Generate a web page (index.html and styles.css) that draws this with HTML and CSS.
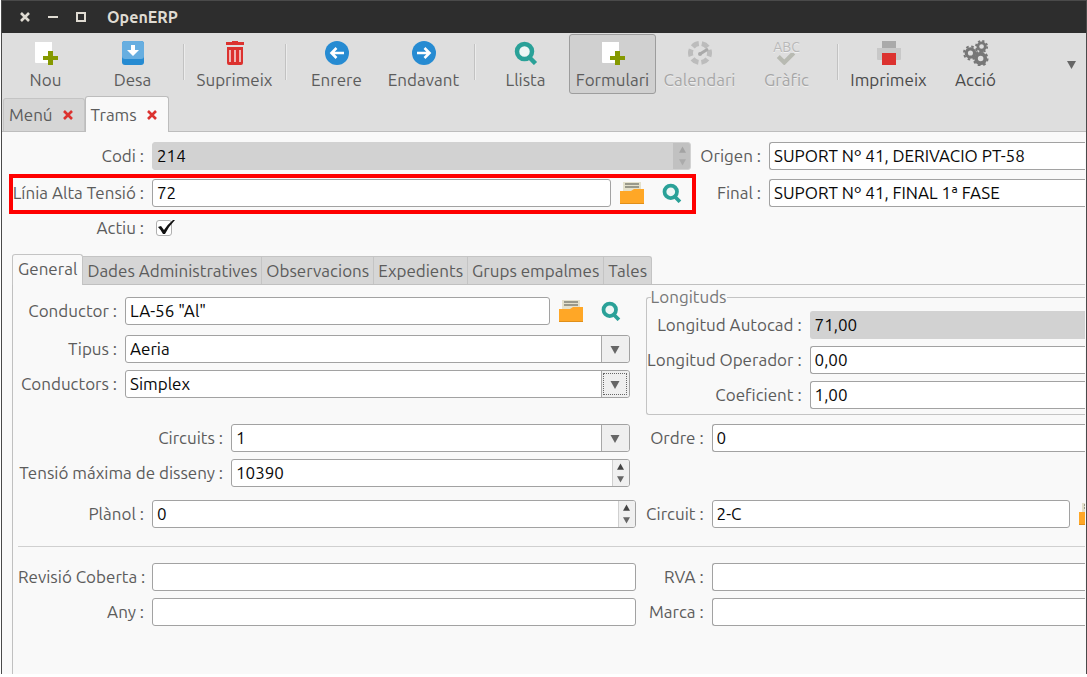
FILE: index.html
```html
<!DOCTYPE html>
<html lang="ca">
<head>
<meta charset="utf-8">
<title>OpenERP</title>
<link rel="stylesheet" href="styles.css">
</head>
<body>
<svg class="sprite" aria-hidden="true">
  <symbol id="i-new" viewBox="0 0 24 24"><path d="M1 1h17v13h-4v4h3v4H2a1 1 0 0 1-1-1z" fill="#fff"/><path d="M14 10h5v5h5v4h-5v5h-5v-5H9v-4h5z" fill="#859900"/></symbol>
  <symbol id="i-save" viewBox="0 0 24 24"><rect x="1" y="0" width="22" height="24" rx="3" fill="#268bd2"/><path d="M4 0h16a3 3 0 0 1 3 3v12a3 3 0 0 1-3 3H4a3 3 0 0 1-3-3V3a3 3 0 0 1 3-3z" fill="#67aee0"/><path d="M10 4h4v5h4l-6 6-6-6h4z" fill="#fff"/></symbol>
  <symbol id="i-trash" viewBox="0 0 24 24"><path d="M9 0h6v1h6v3H3V1h6zM4 6h16v16a2 2 0 0 1-2 2H6a2 2 0 0 1-2-2z" fill="#dc322f"/><path d="M7 9v12M12 9v12M17 9v12" stroke="#f0b5b4" stroke-width="2"/></symbol>
  <symbol id="i-back" viewBox="0 0 24 24"><circle cx="12" cy="12" r="12" fill="#268bd2"/><path d="M19 12H7M11.500 7l-5 5 5 5" fill="none" stroke="#fff" stroke-width="2.600"/></symbol>
  <symbol id="i-next" viewBox="0 0 24 24"><circle cx="12" cy="12" r="12" fill="#268bd2"/><path d="M5 12h12M12.500 7l5 5-5 5" fill="none" stroke="#fff" stroke-width="2.600"/></symbol>
  <symbol id="i-search" viewBox="0 0 24 24"><circle cx="10.500" cy="10.500" r="7.500" fill="#eef6f5" stroke="#2aa198" stroke-width="4.500"/><path d="M15.500 16.500l6 6" stroke="#2aa198" stroke-width="4.500"/></symbol>
  <symbol id="i-gauge" viewBox="0 0 24 24"><circle cx="12" cy="12" r="9.500" fill="none" stroke="#bcbcbc" stroke-width="5" stroke-dasharray="6.900 3.050" stroke-dashoffset="3.450"/><path d="M12 13l8-5" stroke="#aaa" stroke-width="3"/><circle cx="12" cy="13" r="2" fill="#aaa"/></symbol>
  <symbol id="i-gears" viewBox="0 0 28 28"><g fill="none" stroke="#777"><circle cx="8" cy="14" r="4.500" stroke-width="3.500"/><circle cx="8" cy="14" r="7" stroke-width="2" stroke-dasharray="2.750 2.750"/><circle cx="20" cy="7" r="4" stroke-width="3"/><circle cx="20" cy="7" r="6" stroke-width="2" stroke-dasharray="2.360 2.360"/><circle cx="19" cy="20" r="5" stroke-width="4"/><circle cx="19" cy="20" r="7.500" stroke-width="2" stroke-dasharray="2.950 2.950"/></g></symbol>
  <symbol id="i-print" viewBox="0 0 24 24"><path d="M5 0h14v7H5z" fill="#aaa"/><path d="M0 7h24v11a1 1 0 0 1-1 1H1a1 1 0 0 1-1-1z" fill="#c8c8c8"/><path d="M5 12h14v12H5z" fill="#dc322f"/></symbol>
  <symbol id="i-check" viewBox="0 0 24 14"><path d="M3 4l7 7L21 0" fill="none" stroke="#b8bab2" stroke-width="5"/></symbol>
  <symbol id="i-folder" viewBox="0 0 24 24"><path d="M3 1h18v16H3z" fill="#e4e1cc"/><path d="M5 3h14M5 6h14" stroke="#99998a" stroke-width="2"/><path d="M0 10h11l3-2h10v15H0z" fill="#ffa726"/><path d="M0 22h24v1H0z" fill="#e08f1a"/></symbol>
  <symbol id="i-down" viewBox="0 0 10 10"><path d="M0 1h10L5 10z" fill="#666"/></symbol>
  <symbol id="i-up" viewBox="0 0 10 10"><path d="M0 9h10L5 0z" fill="#444"/></symbol>
  <symbol id="i-x" viewBox="0 0 10 10"><path d="M1 1l8 8M9 1L1 9" stroke="currentColor" stroke-width="2.600"/></symbol>
</svg>

<div class="window">
  <header class="titlebar">
    <button class="winbtn" aria-label="Tanca"><svg><use href="#i-x"/></svg></button>
    <button class="winbtn" aria-label="Minimitza"><svg viewBox="0 0 10 10"><path d="M0 5h10" stroke="currentColor" stroke-width="2"/></svg></button>
    <button class="winbtn" aria-label="Maximitza"><svg viewBox="0 0 10 10"><path d="M1 1h8v8H1z" fill="none" stroke="currentColor" stroke-width="2"/></svg></button>
    <h1 class="title">OpenERP</h1>
  </header>

  <nav class="toolbar">
    <button class="tool"><svg><use href="#i-new"/></svg>Nou</button>
    <button class="tool"><svg><use href="#i-save"/></svg>Desa</button>
    <span class="sep"></span>
    <button class="tool"><svg><use href="#i-trash"/></svg>Suprimeix</button>
    <span class="sep"></span>
    <button class="tool"><svg><use href="#i-back"/></svg>Enrere</button>
    <button class="tool"><svg><use href="#i-next"/></svg>Endavant</button>
    <span class="sep"></span>
    <button class="tool"><svg><use href="#i-search"/></svg>Llista</button>
    <button class="tool tool--active"><svg><use href="#i-new"/></svg>Formulari</button>
    <button class="tool" disabled><svg><use href="#i-gauge"/></svg>Calendari</button>
    <button class="tool" disabled><span class="abc"><span>ABC</span><svg><use href="#i-check"/></svg></span>Gràfic</button>
    <span class="sep"></span>
    <button class="tool tool--dark"><svg><use href="#i-print"/></svg>Imprimeix</button>
    <button class="tool tool--dark"><svg class="gears"><use href="#i-gears"/></svg>Acció</button>
    <button class="more" aria-label="Més"><svg><use href="#i-down"/></svg></button>
  </nav>

  <div class="doctabs">
    <div class="doctab"><span>Menú</span><button class="close" aria-label="Tanca Menú"><svg><use href="#i-x"/></svg></button></div>
    <div class="doctab doctab--active"><span>Trams</span><button class="close" aria-label="Tanca Trams"><svg><use href="#i-x"/></svg></button></div>
  </div>

  <main class="page">
    <section class="head">
      <div class="rows rows--head">
        <div class="row"><label for="codi">Codi :</label><div class="spin spin--off"><input id="codi" value="214" readonly><span class="steps"><button aria-label="Més" disabled><svg><use href="#i-up"/></svg></button><button aria-label="Menys" disabled><svg><use href="#i-down"/></svg></button></span></div></div>
        <div class="row row--marked"><label for="linia">Línia Alta Tensió :</label><div class="lookup"><input class="field" id="linia" value="72"><button class="icon" aria-label="Obre"><svg><use href="#i-folder"/></svg></button><button class="icon" aria-label="Cerca"><svg><use href="#i-search"/></svg></button></div></div>
        <div class="row row--check"><label for="actiu">Actiu :</label><span class="check"><input type="checkbox" id="actiu" checked><svg viewBox="0 0 20 18"><path d="M2 8l3-1 3 4q4-6 9-10l2 0q-6 6-10 14H7q-2-4-5-7z"/></svg></span></div>
      </div>
      <div class="rows rows--origin">
        <div class="row"><label for="origen">Origen :</label><input class="field field--cut" id="origen" value="SUPORT Nº 41, DERIVACIO PT-58"></div>
        <div class="row"><label for="final">Final :</label><input class="field field--cut" id="final" value="SUPORT Nº 41, FINAL 1ª FASE"></div>
      </div>
    </section>

    <div class="tabs" role="tablist">
      <button class="tab tab--active" role="tab" aria-selected="true">General</button>
      <button class="tab" role="tab">Dades Administratives</button>
      <button class="tab" role="tab">Observacions</button>
      <button class="tab" role="tab">Expedients</button>
      <button class="tab" role="tab">Grups empalmes</button>
      <button class="tab" role="tab">Tales</button>
    </div>

    <section class="pane" role="tabpanel">
      <div class="split">
        <div class="rows rows--conductor">
          <div class="row row--loose"><label for="conductor">Conductor :</label><div class="lookup"><input class="field" id="conductor" value="LA-56 &quot;Al&quot;"><button class="icon" aria-label="Obre"><svg><use href="#i-folder"/></svg></button><button class="icon" aria-label="Cerca"><svg><use href="#i-search"/></svg></button></div></div>
          <div class="row"><label for="tipus">Tipus :</label><div class="combo"><select id="tipus"><option>Aeria</option></select><span class="arrow"><svg><use href="#i-down"/></svg></span></div></div>
          <div class="row"><label for="conductors">Conductors :</label><div class="combo combo--focus"><select id="conductors"><option>Simplex</option></select><span class="arrow"><svg><use href="#i-down"/></svg></span></div></div>
        </div>
        <fieldset class="group">
          <legend>Longituds</legend>
          <div class="rows rows--length">
            <div class="row"><label for="autocad">Longitud Autocad :</label><input class="field field--cut field--off" id="autocad" value="71,00" readonly></div>
            <div class="row"><label for="operador">Longitud Operador :</label><input class="field field--cut" id="operador" value="0,00"></div>
            <div class="row"><label for="coef">Coeficient :</label><input class="field field--cut" id="coef" value="1,00"></div>
          </div>
        </fieldset>
      </div>

      <div class="split">
        <div class="rows rows--circuits">
          <div class="row"><label for="circuits">Circuits :</label><div class="combo"><select id="circuits"><option>1</option></select><span class="arrow"><svg><use href="#i-down"/></svg></span></div></div>
          <div class="row"><label for="tensio">Tensió máxima de disseny :</label><div class="spin"><input id="tensio" value="10390"><span class="steps"><button aria-label="Més"><svg><use href="#i-up"/></svg></button><button aria-label="Menys"><svg><use href="#i-down"/></svg></button></span></div></div>
        </div>
        <div class="rows rows--right">
          <div class="row"><label for="ordre">Ordre :</label><input class="field field--cut" id="ordre" value="0"></div>
        </div>
      </div>

      <div class="split">
        <div class="rows rows--left">
          <div class="row"><label for="planol">Plànol :</label><div class="spin"><input id="planol" value="0"><span class="steps"><button aria-label="Més"><svg><use href="#i-up"/></svg></button><button aria-label="Menys"><svg><use href="#i-down"/></svg></button></span></div></div>
        </div>
        <div class="rows rows--right">
          <div class="row"><label for="circuit">Circuit :</label><div class="lookup lookup--cut"><input class="field" id="circuit" value="2-C"><button class="icon" aria-label="Obre"><svg><use href="#i-folder"/></svg></button></div></div>
        </div>
      </div>

      <hr class="rule">

      <div class="split">
        <div class="rows rows--left">
          <div class="row"><label for="revisio">Revisió Coberta :</label><input class="field" id="revisio"></div>
          <div class="row"><label for="any">Any :</label><input class="field" id="any"></div>
        </div>
        <div class="rows rows--right">
          <div class="row"><label for="rva">RVA :</label><input class="field field--cut" id="rva"></div>
          <div class="row"><label for="marca">Marca :</label><input class="field field--cut" id="marca"></div>
        </div>
      </div>
    </section>
  </main>
</div>
</body>
</html>
```

FILE: styles.css
```css
* { box-sizing: border-box; }

body {
  margin: 0;
  padding: 0 0 3px 1px;
  background: #fff;
  color: #5c5c5c;
  font: 17px/20px Ubuntu, "Noto Sans", sans-serif;
}

button, input, select { font: inherit; color: inherit; margin: 0; }
button { background: none; border: 0; padding: 0; }
svg { display: block; overflow: visible; }
.sprite { position: absolute; width: 0; height: 0; }

.window {
  display: flex;
  flex-direction: column;
  min-height: calc(100vh - 3px);
  border: solid #4a4a4a;
  border-width: 1px 1px 0;
  background: #dedede;
  overflow: hidden;
}

/* Title bar */
.titlebar {
  display: flex;
  align-items: center;
  gap: 18px;
  height: 32px;
  padding-left: 18px;
  background: #2d2d2d;
  color: #dfdbd2;
}
.winbtn svg { width: 10px; height: 10px; }
.title { margin: 0 0 0 3px; font-size: 16px; font-weight: 600; }

/* Toolbar */
.toolbar { display: flex; height: 62px; }
.tool {
  display: flex;
  flex: none;
  flex-direction: column;
  align-items: center;
  gap: 5px;
  width: 87px;
  height: 60px;
  margin-top: 1px;
  padding-top: 6px;
  border: 1px solid transparent;
  border-radius: 3px;
}
.tool svg { width: 24px; height: 24px; }
.tool .gears { width: 28px; height: 26px; margin: -1px 0; }
.tool--active { background: #d0d0d0; border-color: #9d9d9d; }
.tool--dark { color: #4a4a4a; }
.tool:disabled { color: #a6a6a6; text-shadow: 0 1px #f0f0f0; }
.tool .abc { display: flex; flex-direction: column; align-items: center; height: 24px; font-size: 14px; line-height: 12px; color: #b8b8b8; }
.tool .abc svg { width: 24px; height: 12px; }
.sep { flex: none; width: 1px; height: 36px; margin: 11px 7px 0; background: #c2c2c2; box-shadow: 1px 0 #ececec; }
.more { margin: 0 10px 0 auto; }
.more svg { width: 9px; height: 9px; }

/* Document tabs */
.doctabs { display: flex; align-items: flex-end; height: 37px; padding-left: 1px; border-bottom: 1px solid #bdbdbd; }
.doctab {
  display: flex;
  align-items: center;
  gap: 10px;
  height: 33px;
  padding: 0 11px 0 5px;
  border: 1px solid #c4c4c4;
  border-bottom: 0;
  border-radius: 3px 3px 0 0;
  background: #d6d6d6;
}
.doctab--active { height: 36px; margin-bottom: -1px; background: #f9f9f9; border-color: #bdbdbd; }
.close { color: #dc322f; }
.close svg { width: 10px; height: 10px; }

/* Form layout */
.page { flex: 1; display: flex; flex-direction: column; padding: 10px 1px 0 10px; background: #f9f9f9; }
.head { display: grid; grid-template-columns: 679fr 394fr; }
.rows { display: flex; flex-direction: column; gap: 7px; min-width: 0; }
.row { display: grid; grid-template-columns: var(--label) 1fr; gap: 8px; align-items: center; }
.row label { text-align: right; white-space: nowrap; }
.rows--head, .rows--origin { gap: 9px; }
.rows--head { --label: 132px; }
.rows--origin { --label: 70px; }
.rows--conductor { --label: 99px; padding-right: 6px; }
.rows--circuits { --label: 205px; padding-right: 6px; }
.rows--left { --label: 126px; }
.rows--right { --label: 58px; }
.rows--length { --label: 155px; }
.row--loose { margin-bottom: 3px; }
.row--check { height: 24px; }

.row--marked { position: relative; }
.row--marked::after {
  content: "";
  position: absolute;
  inset: -5px -5px -7px -3px;
  border: 4px solid #f00;
  pointer-events: none;
}

/* Controls */
.field, .spin, .combo {
  width: 100%;
  min-width: 0;
  height: 28px;
  border: 1px solid #a2a2a2;
  border-radius: 3px;
  background: #fff;
  color: #080808;
}
.field { padding: 0 4px 2px; }
.field--cut { border-right: 0; border-radius: 3px 0 0 3px; }
.field--off { background: #d2d2d2; border-color: #d2d2d2; }

.lookup { display: flex; align-items: center; gap: 9px; }
.icon { flex: none; }
.icon svg { width: 24px; height: 24px; }
.icon + .icon { margin: 0 9px; }
.icon + .icon svg { width: 20px; height: 20px; }
.lookup--cut { overflow: hidden; }
.lookup--cut .icon { width: 6px; overflow: hidden; }

.spin { display: flex; overflow: hidden; }
.spin input { flex: 1; min-width: 0; padding: 0 4px 1px; border: 0; background: none; }
.steps { display: flex; flex-direction: column; justify-content: space-evenly; width: 17px; border-left: 1px solid #d0d0d0; background: #f0f0f0; }
.steps button { align-self: center; }
.steps svg { width: 7px; height: 8px; }
.spin--off { background: #d2d2d2; border-color: #d2d2d2; }
.spin--off .steps { background: #bdbdbd; border-color: #bdbdbd; opacity: 0.8; }
.spin--off .steps svg { opacity: 0.3; }

.combo { position: relative; }
.combo select { appearance: none; width: 100%; height: 100%; padding: 0 32px 1px 4px; border: 0; background: none; }
.arrow {
  position: absolute;
  inset: 0 0 0 auto;
  display: grid;
  place-items: center;
  width: 28px;
  border-left: 1px solid #a8a8a8;
  border-radius: 0 3px 3px 0;
  background: #efefef;
  pointer-events: none;
}
.arrow svg { width: 10px; height: 9px; }
.combo--focus .arrow { outline: 1px dotted #666; outline-offset: -3px; }

.check { position: relative; width: 22px; height: 18px; padding-left: 4px; }
.check input { appearance: none; display: block; width: 16px; height: 16px; margin-top: 1px; border: 1px solid #b0b0b0; border-radius: 3px; background: #fff; }
.check svg { position: absolute; inset: 0 auto auto 4px; width: 20px; height: 18px; fill: #111; pointer-events: none; }
.check input:not(:checked) + svg { display: none; }

/* Notebook */
.tabs { display: flex; align-items: flex-end; margin-top: 14px; }
.tab {
  height: 28px;
  padding: 0 4px;
  border: 1px solid #c4c4c4;
  border-width: 1px 1px 0 0;
  background: #d6d6d6;
  white-space: nowrap;
}
.tab:last-child { border-radius: 0 3px 0 0; }
.tab--active { position: relative; height: 31px; margin-bottom: -1px; padding: 0 5px 2px; border-width: 1px 1px 0; border-radius: 3px 3px 0 0; background: #f9f9f9; }
.pane {
  flex: 1;
  display: flex;
  flex-direction: column;
  gap: 13px;
  padding: 0 0 0 5px;
  border: solid #c0c0c0;
  border-width: 1px 0 0 1px;
}
.split { display: grid; grid-template-columns: 617fr 439fr; gap: 10px; }
.split:first-child { padding-top: 4px; margin-bottom: -4px; }
.split:first-child .rows--conductor { padding-top: 8px; }
.group {
  min-width: 0;
  margin: 0;
  padding: 6px 0 5px;
  border: 1px solid #c4c4c4;
  border-right: 0;
  border-radius: 3px 0 0 3px;
}
.group legend { margin-left: 4px; padding: 0; line-height: 16px; color: #777; }
.rule { width: 100%; height: 1px; margin: 5px 0 3px; border: 0; background: #d0d0d0; }
```
